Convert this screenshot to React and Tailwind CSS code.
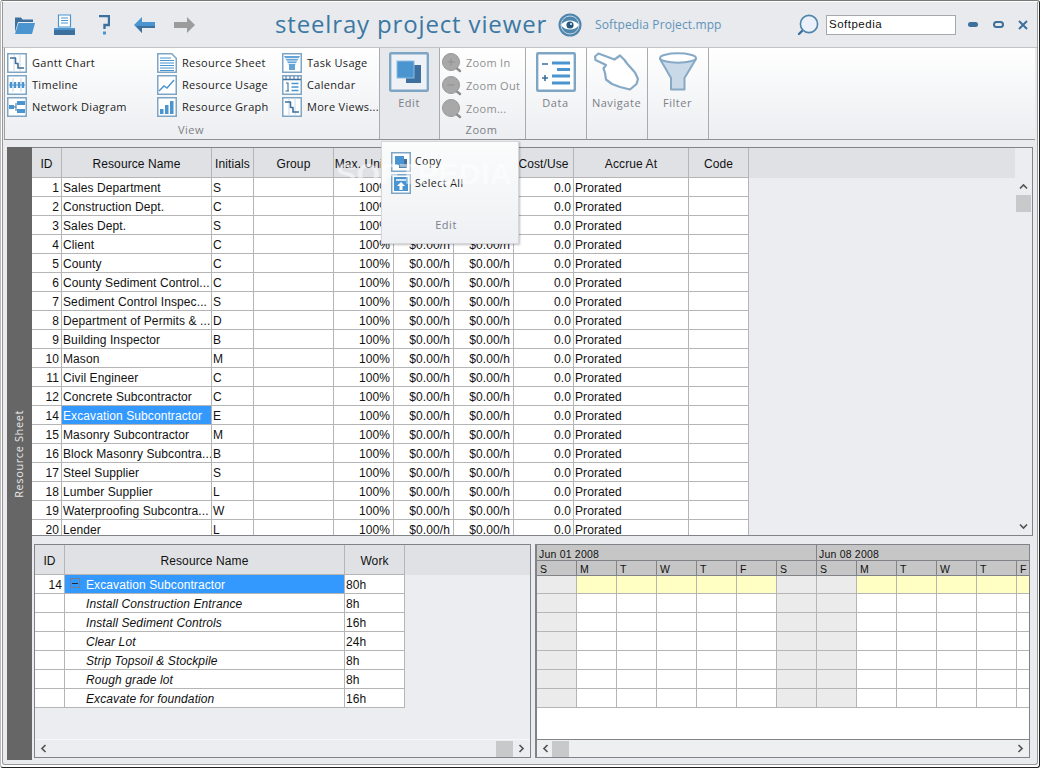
import React from "react";

const rows = [
  [1, "Sales Department", "S"],
  [2, "Construction Dept.", "C"],
  [3, "Sales Dept.", "S"],
  [4, "Client", "C"],
  [5, "County", "C"],
  [6, "County Sediment Control...", "C"],
  [7, "Sediment Control Inspec...", "S"],
  [8, "Department of Permits & ...", "D"],
  [9, "Building Inspector", "B"],
  [10, "Mason", "M"],
  [11, "Civil Engineer", "C"],
  [12, "Concrete Subcontractor", "C"],
  [14, "Excavation Subcontractor", "E"],
  [15, "Masonry Subcontractor", "M"],
  [16, "Block Masonry Subcontra...", "B"],
  [17, "Steel Supplier", "S"],
  [18, "Lumber Supplier", "L"],
  [19, "Waterproofing Subcontra...", "W"],
  [20, "Lender", "L"],
];

const headers = ["ID", "Resource Name", "Initials", "Group", "Max. Units", "Std. Rate", "Ovt. Rate", "Cost/Use", "Accrue At", "Code"];

const tasks = [
  ["Install Construction Entrance", "8h"],
  ["Install Sediment Controls", "16h"],
  ["Clear Lot", "24h"],
  ["Strip Topsoil & Stockpile", "8h"],
  ["Rough grade lot", "8h"],
  ["Excavate for foundation", "16h"],
];

const days = ["S", "M", "T", "W", "T", "F", "S", "S", "M", "T", "W", "T", "F"];
const blue = "#4a94d0";
const dark = "#3d709c";
const frame = "#7fa5c4";

const Frame = ({ children, size = 20, sw = 1.5 }) => (
  <svg width={size} height={size} viewBox="0 0 20 20" className="shrink-0">
    <rect x="0.75" y="0.75" width="18.5" height="18.5" fill="#fff" stroke={frame} strokeWidth={sw} />
    {children}
  </svg>
);

const GanttIcon = () => (
  <Frame>
    <path d="M7 1v18M13 1v18" stroke="#c9d8e5" strokeWidth="1" />
    <path d="M3 5h6M8.5 5v6M8.5 10.5h3M11 10.5v4.5h6" fill="none" stroke={dark} strokeWidth="1.6" />
  </Frame>
);
const TimelineIcon = () => (
  <Frame>
    <path d="M6 3v14M14 3v14" stroke="#c9d8e5" strokeWidth="1" />
    <path d="M2 10h16" stroke={blue} strokeWidth="1" />
    <path d="M4 7v6M8 7v6M12 7v6M16 7v6" stroke={blue} strokeWidth="2.4" />
  </Frame>
);
const NetworkIcon = () => (
  <Frame>
    <rect x="2" y="8" width="5" height="4" fill={blue} />
    <rect x="10" y="4" width="8" height="4" fill={blue} />
    <rect x="10" y="12" width="8" height="4" fill={blue} />
    <path d="M7 10h2M9 6v8" stroke={dark} strokeWidth="1" />
  </Frame>
);
const SheetIcon = () => (
  <svg width="20" height="20" viewBox="0 0 20 20" className="shrink-0">
    <path d="M.75.75h14l4.5 4.5v14H.75z" fill="#fff" stroke={frame} strokeWidth="1.5" />
    <path d="M3 5h11M3 7.5h14M3 10h14M3 12.5h14M3 15h14M3 17.5h14" stroke={blue} strokeWidth="1" />
  </svg>
);
const UsageIcon = () => (
  <Frame>
    <path d="M2 16l5-5 3 2 7-8" fill="none" stroke={blue} strokeWidth="1.4" />
  </Frame>
);
const GraphIcon = () => (
  <Frame>
    <rect x="3" y="12" width="3.5" height="5" fill={blue} />
    <rect x="8" y="8" width="3.5" height="9" fill={blue} />
    <rect x="13" y="4" width="3.5" height="13" fill={blue} />
  </Frame>
);
const TaskUsageIcon = () => (
  <Frame>
    <path d="M2 3h16l-5 9v5H7v-5z" fill={blue} opacity="0.85" />
    <path d="M3 5.5h14M4 8h12M5.5 10.5h9" stroke="#fff" strokeWidth="0.8" />
  </Frame>
);
const CalendarIcon = () => (
  <Frame>
    <path d="M1 4.5h18" stroke={dark} strokeWidth="1.4" />
    <path d="M4 1v3M8 1v3M12 1v3M16 1v3" stroke={dark} strokeWidth="1" />
    <path d="M4 8h2v8M3.5 16h3.5" fill="none" stroke={dark} strokeWidth="1.1" />
    <path d="M9.5 8.5h7M9.5 12h7M9.5 15.5h7" stroke={blue} strokeWidth="1.4" />
  </Frame>
);

const Magnifier = ({ glyph }) => (
  <svg width="22" height="22" viewBox="0 0 22 22" className="shrink-0">
    <path d="M14 15l5 4" stroke="#8c8c8c" strokeWidth="2.4" strokeLinecap="round" />
    <circle cx="10" cy="10" r="8.5" fill="#a8a8a8" stroke="#979797" />
    {glyph === "+" && <path d="M6.5 10h7M10 6.5v7" stroke="#8f8f8f" strokeWidth="1" />}
    {glyph === "-" && <path d="M6.5 10h7" stroke="#8f8f8f" strokeWidth="1" />}
  </svg>
);

const ChevronUp = () => (
  <svg width="9" height="7" viewBox="0 0 9 7"><path d="M1 5.5l3.5-3.5 3.5 3.5" fill="none" stroke="#555" strokeWidth="1.7" /></svg>
);
const ChevronDown = () => (
  <svg width="9" height="7" viewBox="0 0 9 7"><path d="M1 1.5l3.5 3.5 3.5-3.5" fill="none" stroke="#555" strokeWidth="1.7" /></svg>
);
const ChevronLeft = () => (
  <svg width="7" height="9" viewBox="0 0 7 9"><path d="M5.5 1L2 4.5 5.5 8" fill="none" stroke="#555" strokeWidth="1.7" /></svg>
);
const ChevronRight = () => (
  <svg width="7" height="9" viewBox="0 0 7 9"><path d="M1.5 1L5 4.5 1.5 8" fill="none" stroke="#555" strokeWidth="1.7" /></svg>
);

const RibbonItem = ({ icon, label, muted }) => (
  <div className={`flex items-center h-[22px] ${muted ? "gap-[3px]" : "gap-[5px]"}`}>
    {icon}
    <span className={`whitespace-nowrap text-[11px] tracking-[0.3px] ${muted ? "text-[#8f8f8f]" : "text-[#222]"}`}>{label}</span>
  </div>
);

const BigLabel = ({ children }) => (
  <span className="text-[11px] tracking-[0.55px] text-[#7c7f86] mt-[3px] leading-[16px]">{children}</span>
);

const Titlebar = () => (
  <div className="h-[46px] flex items-center border-b border-[#bfc2c6] bg-[#e8eaed] shrink-0">
    <svg width="21" height="18" viewBox="0 0 21 18" className="ml-[11px] mt-[1px]">
      <path d="M1 3V1.5h6l1.5 2H19V6H4L1 16z" fill={dark} />
      <path d="M4.5 7H21l-3 11H1z" fill={blue} />
    </svg>
    <svg width="21" height="21" viewBox="0 0 21 21" className="ml-[19px]">
      <path d="M4.5 1h12v12h-12z" fill="#fff" stroke={blue} strokeWidth="1.2" />
      <path d="M7 4h7M7 6.5h7M7 9h7" stroke={blue} strokeWidth="1" />
      <rect x="0" y="14" width="21" height="2" fill={blue} />
      <rect x="0" y="16" width="21" height="5" fill={dark} />
    </svg>
    <svg width="12" height="20" viewBox="0 0 12 20" className="ml-[23px]">
      <path d="M1 1h10v9H6.5v4" fill="none" stroke={dark} strokeWidth="2.4" />
      <rect x="5" y="16.5" width="3" height="3" fill={blue} />
    </svg>
    <svg width="21" height="16" viewBox="0 0 21 16" className="ml-[24px]">
      <path d="M8 0L0 8l8 8v-5h13V5H8z" fill={blue} />
      <path d="M2 9l6 7v-5h13V9z" fill={dark} />
    </svg>
    <svg width="21" height="16" viewBox="0 0 21 16" className="ml-[19px]">
      <path d="M13 0l8 8-8 8v-5H0V5h13z" fill="#9c9c9c" />
    </svg>
    <span className="ml-[80px] w-[271px] shrink-0 text-[24px] leading-none tracking-[0.85px] text-[#3b78a3] whitespace-nowrap font-['Open_Sans',sans-serif] mt-[-2px]">
      steelray project viewer
    </span>
    <svg width="24" height="24" viewBox="0 0 24 24" className="ml-[12px] shrink-0">
      <circle cx="12" cy="12" r="11.5" fill="#4f86ad" />
      <circle cx="12" cy="12" r="9" fill="none" stroke="#dfe8ef" strokeWidth="0.8" />
      <path d="M3 12c4-6 14-6 18 0-4 6-14 6-18 0z" fill="#fff" />
      <circle cx="12" cy="12" r="3.6" fill="#24577d" />
      <circle cx="13" cy="11" r="1" fill="#fff" />
    </svg>
    <span className="ml-[13px] text-[12px] text-[#5f93ba] whitespace-nowrap w-[202px] shrink-0 font-['Open_Sans',sans-serif]">Softpedia Project.mpp</span>
    <svg width="22" height="22" viewBox="0 0 22 22" className="shrink-0">
      <path d="M5 17l-3 3" stroke={dark} strokeWidth="2.4" strokeLinecap="round" />
      <circle cx="12" cy="10" r="8.6" fill="#eaf1fa" stroke="#4f84ad" strokeWidth="1.6" />
    </svg>
    <div className="ml-[7px] w-[130px] h-[20px] shrink-0 bg-white border border-[#a5a8ac] text-[11.5px] tracking-[0.5px] leading-[17px] pl-[2px] text-[#111]">Softpedia</div>
    <div className="ml-[12px] w-[10px] h-[5px] shrink-0 rounded-full bg-[#3d709c]" />
    <div className="ml-[15px] w-[11px] h-[7px] shrink-0 rounded-full border-2 border-[#3d709c]" />
    <svg width="10" height="10" viewBox="0 0 10 10" className="ml-[14px] shrink-0">
      <path d="M1 1l8 8M9 1l-8 8" stroke="#3d709c" strokeWidth="2" />
    </svg>
  </div>
);

const Ribbon = () => (
  <div className="ml-[1px] mr-[2px] h-[92px] flex border-l border-b border-l-[#a0a0a0] border-b-[#8e9093] bg-gradient-to-b from-white to-[#eceef1] shrink-0 font-['Open_Sans',sans-serif]">
    <div className="w-[375px] border-r border-[#a9abae] flex flex-col pt-[4px]">
      <div className="flex pl-[2px]">
        <div className="w-[150px]">
          <RibbonItem icon={<GanttIcon />} label="Gantt Chart" />
          <RibbonItem icon={<TimelineIcon />} label="Timeline" />
          <RibbonItem icon={<NetworkIcon />} label="Network Diagram" />
        </div>
        <div className="w-[125px]">
          <RibbonItem icon={<SheetIcon />} label="Resource Sheet" />
          <RibbonItem icon={<UsageIcon />} label="Resource Usage" />
          <RibbonItem icon={<GraphIcon />} label="Resource Graph" />
        </div>
        <div>
          <RibbonItem icon={<TaskUsageIcon />} label="Task Usage" />
          <RibbonItem icon={<CalendarIcon />} label="Calendar" />
          <RibbonItem icon={<GanttIcon />} label="More Views..." />
        </div>
      </div>
      <div className="mt-[4px] text-center text-[11px] tracking-[0.55px] text-[#7c7f86] pr-[2px]">View</div>
    </div>
    <div className="w-[60px] border-r border-[#a9abae] bg-[#e6e8ec] flex flex-col items-center pt-[4px] pr-[1px]">
      <svg width="40" height="40" viewBox="0 0 40 40">
        <rect x="1.2" y="1.2" width="37.6" height="37.6" rx="1" fill="#eef2f6" stroke={frame} strokeWidth="2.4" />
        <rect x="17" y="13" width="15" height="18" fill={dark} />
        <rect x="8" y="9" width="17" height="17" fill={blue} stroke="#8dbbe0" />
      </svg>
      <BigLabel>Edit</BigLabel>
    </div>
    <div className="w-[86px] border-r border-[#a9abae] flex flex-col pt-[4px] pl-[1px]">
      <RibbonItem icon={<Magnifier glyph="+" />} label="Zoom In" muted />
      <div className="h-[1px]" />
      <RibbonItem icon={<Magnifier glyph="-" />} label="Zoom Out" muted />
      <div className="h-[1px]" />
      <RibbonItem icon={<Magnifier />} label="Zoom..." muted />
      <div className="mt-[2px] text-center text-[11px] tracking-[0.55px] text-[#7c7f86] pr-[3px]">Zoom</div>
    </div>
    <div className="w-[61px] border-r border-[#a9abae] flex flex-col items-center pt-[4px] pr-[1px]">
      <svg width="40" height="40" viewBox="0 0 40 40">
        <rect x="1.2" y="1.2" width="37.6" height="37.6" rx="1" fill="#fff" stroke={frame} strokeWidth="2.4" />
        <path d="M6 12h6M6 26h6M9 23v6" stroke={dark} strokeWidth="1.6" />
        <path d="M16 11h18M21 17.5h13M16 24h18M16 31h18" stroke={blue} strokeWidth="2.8" />
      </svg>
      <BigLabel>Data</BigLabel>
    </div>
    <div className="w-[61px] border-r border-[#a9abae] flex flex-col items-center pt-[4px] pr-[1px]">
      <svg width="46" height="40" viewBox="0 0 46 40">
        <path
          d="M1 4.5L4.5 1.5 20.5 7.5 26 3.5 30.5 8 33 11.5 41 20.5 44 27 42.5 32 36 37.5 26 35 18 32 12 27.5 11 21 9.5 16.5 12 13 1.5 8z"
          fill="#fff"
          stroke="#86a9c6"
          strokeWidth="2.2"
          strokeLinejoin="round"
        />
      </svg>
      <BigLabel>Navigate</BigLabel>
    </div>
    <div className="w-[61px] border-r border-[#a9abae] flex flex-col items-center pt-[4px] pr-[1px]">
      <svg width="38" height="40" viewBox="0 0 38 40">
        <path d="M1 7l11 19v11.5h13.5V26L37 7z" fill="#c9d9e8" stroke="#86a9c6" strokeWidth="2" strokeLinejoin="round" />
        <ellipse cx="19" cy="6" rx="18" ry="4.7" fill="#fff" stroke="#86a9c6" strokeWidth="2" />
      </svg>
      <BigLabel>Filter</BigLabel>
    </div>
  </div>
);

const ResourceRow = ({ row }) => {
  const selected = row[0] === 14;
  return (
    <div className="grid grid-cols-[30px_150px_42px_80px_60px_60px_60px_60px_115px_60px] grid-rows-[19px] h-[19px] w-[717px] shrink-0 leading-[20px]">
      <div className="bg-white border-r border-b border-[#b5b5b5] text-right pr-[2px]">{row[0]}</div>
      <div className={`border-r border-b border-[#b5b5b5] pl-[1px] whitespace-nowrap overflow-hidden ${selected ? "bg-[#3399ff] text-white" : "bg-white"}`}>{row[1]}</div>
      <div className="bg-white border-r border-b border-[#b5b5b5] pl-[1px]">{row[2]}</div>
      <div className="bg-white border-r border-b border-[#b5b5b5]" />
      <div className="bg-white border-r border-b border-[#b5b5b5] text-right pr-[3px]">100%</div>
      <div className="bg-white border-r border-b border-[#b5b5b5] text-right pr-[3px]">$0.00/h</div>
      <div className="bg-white border-r border-b border-[#b5b5b5] text-right pr-[3px]">$0.00/h</div>
      <div className="bg-white border-r border-b border-[#b5b5b5] text-right pr-[2px]">0.0</div>
      <div className="bg-white border-r border-b border-[#b5b5b5] pl-[1px]">Prorated</div>
      <div className="bg-white border-r border-b border-[#b5b5b5]" />
    </div>
  );
};

const ResourceTable = () => (
  <div className="h-[389px] shrink-0 flex border-t border-b border-r border-[#808488] bg-[#ebedf0] overflow-hidden">
    <div className="flex-1 flex flex-col min-w-0">
      <div className="h-[30px] shrink-0 bg-[#dfe1e5]">
        <div className="grid grid-cols-[30px_150px_42px_80px_60px_60px_60px_60px_115px_60px] grid-rows-[30px] w-[717px] h-[30px] leading-[32px] text-center">
          {headers.map((h) => (
            <div key={h} className="border-r border-b border-[#b5b5b5] whitespace-nowrap overflow-hidden">{h}</div>
          ))}
        </div>
      </div>
      <div className="flex flex-col">
        {rows.map((r) => (
          <ResourceRow key={r[0]} row={r} />
        ))}
      </div>
    </div>
    <div className="w-[17px] shrink-0 flex flex-col items-center">
      <div className="h-[30px] shrink-0" />
      <div className="h-[17px] shrink-0 flex items-center justify-center"><ChevronUp /></div>
      <div className="w-[15px] h-[17px] bg-[#c8c9cb]" />
      <div className="flex-1" />
      <div className="h-[17px] shrink-0 flex items-center justify-center"><ChevronDown /></div>
    </div>
  </div>
);

const TaskTable = () => (
  <div className="w-[497px] ml-[2px] border border-[#808488] bg-[#ebedf0] flex flex-col">
    <div className="h-[30px] shrink-0 bg-[#dfe1e5]">
      <div className="grid grid-cols-[30px_280px_60px] grid-rows-[30px] w-[370px] h-[30px] leading-[32px] text-center">
        <div className="border-r border-b border-[#b5b5b5]">ID</div>
        <div className="border-r border-b border-[#b5b5b5]">Resource Name</div>
        <div className="border-r border-b border-[#b5b5b5]">Work</div>
      </div>
    </div>
    <div className="grid grid-cols-[30px_280px_60px] grid-rows-[19px] w-[370px] h-[19px] leading-[20px]">
      <div className="bg-white border-r border-b border-[#b5b5b5] text-right pr-[2px]">14</div>
      <div className="bg-[#3399ff] text-white flex items-center border-r border-b border-[#b5b5b5]">
        <div className="ml-[5px] w-[10px] h-[10px] border border-[#6f7f95] flex items-center justify-center mb-[2px]">
          <div className="w-[6px] h-[1px] bg-[#1f2a38]" />
        </div>
        <span className="ml-[6px] mt-[1px]">Excavation Subcontractor</span>
      </div>
      <div className="bg-white border-r border-b border-[#b5b5b5] pl-[1px]">80h</div>
    </div>
    {tasks.map((t) => (
      <div key={t[0]} className="grid grid-cols-[30px_280px_60px] grid-rows-[19px] w-[370px] h-[19px] leading-[20px]">
        <div className="bg-white border-r border-b border-[#b5b5b5]" />
        <div className="bg-white border-r border-b border-[#b5b5b5] pl-[21px] italic whitespace-nowrap">{t[0]}</div>
        <div className="bg-white border-r border-b border-[#b5b5b5] pl-[1px]">{t[1]}</div>
      </div>
    ))}
    <div className="flex-1" />
    <div className="h-[18px] shrink-0 border-t border-[#f6f7f8] flex items-center pl-[5px] pr-[5px]">
      <ChevronLeft />
      <div className="flex-1" />
      <div className="w-[17px] h-[16px] bg-[#c8c9cb] mr-[5px]" />
      <ChevronRight />
    </div>
  </div>
);

const Chart = () => (
  <div className="w-[495px] ml-[4px] border border-[#808488] border-l-2 bg-white flex flex-col overflow-hidden">
    <div className="h-[16px] shrink-0 flex bg-[#c6c6c6] border-b border-[#808488] text-[10.5px] leading-[19px] tracking-[0.2px]">
      <div className="w-[280px] shrink-0 pl-[2px] border-r border-[#808488]">Jun 01 2008</div>
      <div className="pl-[2px]">Jun 08 2008</div>
    </div>
    <div className="h-[15px] shrink-0 flex bg-[#c6c6c6] border-b border-[#808488] text-[10.5px] leading-[17px]">
      {days.map((d, i) => (
        <div key={i} className="w-[40px] shrink-0 pl-[3px] border-r border-[#808488]">{d}</div>
      ))}
    </div>
    {[0, 1, 2, 3, 4, 5, 6].map((r) => (
      <div key={r} className={`flex shrink-0 ${r === 0 ? "h-[18px]" : "h-[19px]"}`}>
        {days.map((d, i) => {
          const weekend = i === 0 || i === 6 || i === 7;
          return (
            <div
              key={i}
              className={`w-[40px] shrink-0 border-r border-b border-[#b5b5b5] ${weekend ? "bg-[#ebebeb]" : r === 0 ? "bg-[#ffffc4]" : "bg-white"}`}
            />
          );
        })}
      </div>
    ))}
    <div className="flex-1" />
    <div className="h-[18px] shrink-0 border-t border-[#808488] bg-[#eeeff1] flex items-center pl-[5px] pr-[5px]">
      <ChevronLeft />
      <div className="w-[17px] h-[16px] bg-[#c8c9cb] ml-[3px]" />
      <div className="flex-1" />
      <ChevronRight />
    </div>
  </div>
);

const EditPopup = () => (
  <div className="absolute left-[380px] top-[140px] w-[138px] h-[103px] bg-gradient-to-b from-[#fbfcfc] to-[#eef0f3] border border-[#d5d7da] shadow-[1px_1px_2px_rgba(0,0,0,0.25)] pl-[9px] pt-[9px] font-['Open_Sans',sans-serif]">
    <div className="flex items-center h-[22px] gap-[4px]">
      <Frame>
        <rect x="8" y="7" width="8" height="9" fill={dark} />
        <rect x="4" y="4" width="9" height="9" fill={blue} />
      </Frame>
      <span className="text-[10.5px] tracking-[0.5px] text-[#222]">Copy</span>
    </div>
    <div className="flex items-center h-[22px] gap-[4px]">
      <Frame>
        <rect x="3" y="3" width="14" height="14" fill={blue} />
        <path d="M5 6h10" stroke="#fff" strokeWidth="1.4" />
        <path d="M10 8l4 4h-2.5v4h-3v-4H6z" fill="#fff" />
      </Frame>
      <span className="text-[10.5px] tracking-[0.5px] text-[#222]">Select All</span>
    </div>
    <div className="mt-[22px] text-center text-[11px] tracking-[0.55px] text-[#7a7f90] pr-[17px]">Edit</div>
  </div>
);

export default function App() {
  return (
    <div className="relative w-[1040px] h-[768px] bg-white border border-t-[#777] border-l-[#bbb] border-r-[#222] border-b-[#222] rounded-[3px] pl-[1px] pt-[1px] pr-[1px] pb-[2px] overflow-hidden text-[12px] tracking-[0.1px] text-[#111] font-['Liberation_Sans',sans-serif]">
      <div className="h-full border-l border-r border-b border-[#999] rounded-b-[3px] bg-[#e9ebee] flex flex-col">
        <Titlebar />
        <Ribbon />
        <div className="flex flex-1 pl-[4px] pt-[7px] pr-[1px] min-h-0">
          <div className="w-[25px] h-[613px] shrink-0 bg-[#666] flex items-center justify-center">
            <span className="[writing-mode:vertical-rl] rotate-180 text-[11px] tracking-[0.6px] text-[#e8e8e8] font-['Open_Sans',sans-serif]">Resource Sheet</span>
          </div>
          <div className="flex flex-col w-[1001px]">
            <ResourceTable />
            <div className="flex mt-[8px] h-[214px]">
              <TaskTable />
              <Chart />
            </div>
          </div>
        </div>
      </div>
      <EditPopup />
      <div className="absolute left-[335px] top-[155px] text-[30px] font-bold tracking-[0.5px] leading-[36px] text-white/50 pointer-events-none">SOFTPEDIA</div>
    </div>
  );
}
